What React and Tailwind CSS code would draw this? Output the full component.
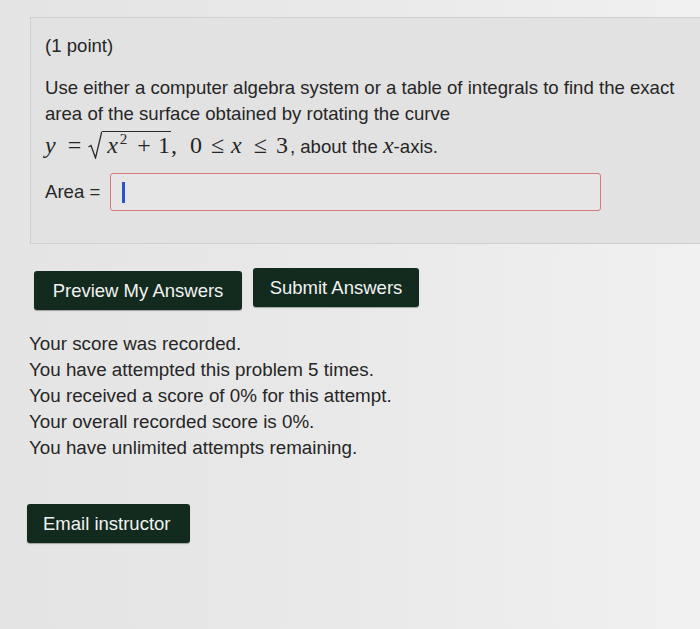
import React from 'react';

const Btn = ({ children, className = '' }) => (
  <button className={`bg-[#132b1f] text-[#f2f2f2] text-[18.5px] rounded-[3px] shadow-[0_1px_1px_rgba(0,0,0,0.3)] ${className}`}>
    {children}
  </button>
);

const M = ({ children, className = '' }) => (
  <span className={`font-['Liberation_Serif',serif] text-[24px] leading-[22px] ${className}`}>{children}</span>
);

const App = () => {
  const lines = [
    'Your score was recorded.',
    'You have attempted this problem 5 times.',
    'You received a score of 0% for this attempt.',
    'Your overall recorded score is 0%.',
    'You have unlimited attempts remaining.',
  ];

  return (
    <div className="w-[700px] h-[629px] overflow-hidden bg-gradient-to-r from-[#e4e4e4] via-[#e9e9e9] to-[#f1f1f1] font-['Liberation_Sans',Arial,sans-serif] text-[#262626]">
      <div className="pt-[17px] pl-[30px]">
        <div className="w-[700px] h-[227px] bg-[#e2e2e2] border border-[#cfcfcf] pl-[14px] pt-[16px]">
          <p className="text-[18.6px] leading-[24px]">(1 point)</p>
          <div className="mt-[17px] text-[18.6px] leading-[26px] w-[650px]">
            <p>Use either a computer algebra system or a table of integrals to find the exact</p>
            <p>area of the surface obtained by rotating the curve</p>
            <p className="flex items-baseline h-[30px] pt-[4px]">
              <M className="italic">y</M>
              <M className="ml-[12px]">=</M>
              <span className="relative ml-[7px] pl-[14px] inline-flex items-baseline">
                <svg className="absolute left-0 top-0 w-[14px] h-[28px]" viewBox="0 0 14 28" preserveAspectRatio="none">
                  <path d="M0.5 16 L3 14.5 L7.5 27 L13.8 0.6" fill="none" stroke="#2a2a2a" strokeWidth="1.3" />
                </svg>
                <span className="border-t-[1.3px] border-[#2a2a2a] pt-[2px] pl-[5px] pr-[1px] inline-flex items-baseline">
                  <M className="italic">x</M>
                  <span className="font-['Liberation_Serif',serif] text-[15px] ml-[2px] relative -top-[9px]">2</span>
                  <M className="ml-[10px]">+</M>
                  <M className="ml-[7px]">1</M>
                </span>
              </span>
              <M>,</M>
              <M className="ml-[13px]">0</M>
              <M className="ml-[9px]">≤</M>
              <M className="ml-[7px] italic">x</M>
              <M className="ml-[12px]">≤</M>
              <M className="ml-[9px]">3</M>
              <span className="ml-[2px] whitespace-pre">, about the </span>
              <M className="italic">x</M>
              <span>-axis.</span>
            </p>
          </div>
          <div className="mt-[16px] flex items-center">
            <span className="text-[18.6px] w-[65px]">Area =</span>
            <div className="w-[491px] h-[38px] rounded-[3px] border border-[#d87a7a] bg-[#e6e6e6] flex items-center pl-[11px]">
              <div className="w-[3px] h-[21px] bg-[#2a52c9]" />
            </div>
          </div>
        </div>
      </div>

      <div className="pl-[34px] mt-[26px] flex items-start gap-[11px]">
        <Btn className="w-[208px] h-[39px] mt-[1px]">Preview My Answers</Btn>
        <Btn className="w-[166px] h-[39px] -mt-[2px]">Submit Answers</Btn>
      </div>

      <div className="pl-[29px] mt-[21px] text-[18.8px] leading-[26px]">
        {lines.map((l) => (
          <p key={l}>{l}</p>
        ))}
      </div>

      <div className="pl-[27px] mt-[43px]">
        <Btn className="w-[163px] h-[39px] text-left pl-[16px]">Email instructor</Btn>
      </div>
    </div>
  );
};

export default App;
